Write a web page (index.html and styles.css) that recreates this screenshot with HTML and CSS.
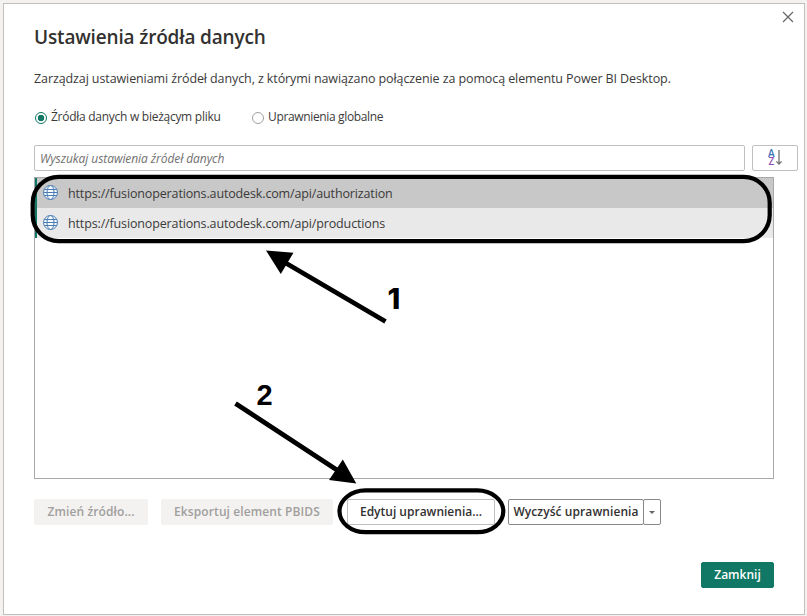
FILE: index.html
```html
<!DOCTYPE html>
<html lang="pl">
<head>
<meta charset="utf-8">
<title>Ustawienia źródła danych</title>
<link rel="stylesheet" href="styles.css">
</head>
<body>
<main class="dialog">
  <header class="header">
    <h1 class="title"><span>Ustawienia źródła danych</span></h1>
    <button class="close" aria-label="Zamknij okno"><svg width="12" height="12" viewBox="0 0 12 12"><path d="M1 1l10 10M11 1L1 11" stroke="#666" stroke-width="1.2" fill="none"/></svg></button>
  </header>
  <p class="description"><span>Zarządzaj ustawieniami źródeł danych, z którymi nawiązano połączenie za pomocą elementu Power BI Desktop.</span></p>
  <div class="scopes">
    <label class="scope scope-file"><i class="radio checked"></i><span>Źródła danych w bieżącym pliku</span></label>
    <label class="scope scope-global"><i class="radio"></i><span>Uprawnienia globalne</span></label>
  </div>
  <div class="search-row">
    <div class="search"><span>Wyszukaj ustawienia źródeł danych</span></div>
    <button class="sort" aria-label="Sortuj">
      <svg width="16" height="20" viewBox="0 0 16 20"><text class="a" x="1" y="9">A</text><text class="z" x="1.5" y="17">Z</text><path d="M12 2v14M9.4 13.4l2.6 2.7 2.6-2.7" stroke="#707070" stroke-width="1.3" fill="none"/></svg>
    </button>
  </div>
  <div class="list">
    <div class="row selected">
      <svg class="globe" width="15" height="15" viewBox="0 0 15 15"><g fill="#f8fbfd" stroke="#4a7db5" stroke-width="1"><circle cx="7.5" cy="7.5" r="7"/><ellipse cx="7.5" cy="7.5" rx="3.5" ry="7"/><path d="M1.2 4.5h12.6M1.2 10.5h12.6M.5 7.5h14" fill="none"/></g></svg>
      <span>https://fusionoperations.autodesk.com/api/authorization</span>
    </div>
    <div class="row">
      <svg class="globe" width="15" height="15" viewBox="0 0 15 15"><g fill="#f8fbfd" stroke="#4a7db5" stroke-width="1"><circle cx="7.5" cy="7.5" r="7"/><ellipse cx="7.5" cy="7.5" rx="3.5" ry="7"/><path d="M1.2 4.5h12.6M1.2 10.5h12.6M.5 7.5h14" fill="none"/></g></svg>
      <span>https://fusionoperations.autodesk.com/api/productions</span>
    </div>
  </div>
  <div class="actions">
    <button class="btn disabled change"><span>Zmień źródło...</span></button>
    <button class="btn disabled export"><span>Eksportuj element PBIDS</span></button>
    <button class="btn edit"><span>Edytuj uprawnienia...</span></button>
    <button class="btn clear"><span>Wyczyść uprawnienia</span></button>
    <button class="btn more" aria-label="Więcej"><svg width="6" height="3" viewBox="0 0 6 3"><path d="M0 0h6L3 3z" fill="#666"/></svg></button>
  </div>
  <footer class="footer"><button class="btn primary"><span>Zamknij</span></button></footer>
</main>
<svg class="annotations" width="807" height="616" viewBox="0 0 807 616">
  <g fill="none" stroke="#000">
    <rect x="32.7" y="176.9" width="737" height="64.2" rx="26" stroke-width="4.2"/>
    <rect x="339.5" y="490.4" width="163.8" height="41.8" rx="26" ry="20.9" stroke-width="4.2"/>
    <path d="M385.5 321.5L284 262M235.5 403.5L340 472" stroke-width="4.8"/>
  </g>
  <path d="M266 250.5l27.5 2.2-12.7 21.2zM356.3 483.5l-27.3-3.5 13.8-20.5z"/>
  <text class="digit-one" x="387.6" y="308.5">1</text><text class="digit-two" x="256.5" y="405">2</text>
</svg>
</body>
</html>
```

FILE: styles.css
```css
* { box-sizing: border-box; }
body {
  margin: 0;
  padding: 3px 2px 1px 3px;
  height: 616px;
  overflow: hidden;
  background: #f3f2f1;
  color: #3b3a39;
  font: 12px/18px "Open Sans", "Noto Sans", sans-serif;
}
button { font: inherit; color: inherit; padding: 0; margin: 0; background: #fff; }
span { white-space: nowrap; }
.dialog {
  width: 802px;
  height: 612px;
  border: 1px solid #c1bfbd;
  background: #fff;
  padding: 0 6px 0 30px;
}
.header { display: flex; justify-content: space-between; height: 64px; }
.title { margin: 19px 0 0; font-size: 19px; line-height: 28px; font-weight: 600; letter-spacing: -0.16px; color: #323130; }
.close { border: 0; width: 12px; height: 12px; margin: 7px 4px 0 0; display: flex; }
.description { margin: 0; height: 40px; line-height: 21px; font-size: 12.5px; letter-spacing: -0.1px; }
.scopes { display: flex; height: 37px; line-height: 18px; }
.scope { display: flex; align-items: flex-start; gap: 4px; }
.scope-file { width: 217px; letter-spacing: -0.27px; }
.scope-global { letter-spacing: -0.35px; }
.radio {
  flex: none;
  width: 12px;
  height: 12px;
  margin: 4px 0 0 1px;
  border: 1px solid #a0a0a0;
  border-radius: 50%;
}
.radio.checked { border-color: #117865; background: radial-gradient(circle, #117865 3px, #fff 3.6px); }
.search-row { display: flex; gap: 7px; height: 32px; }
.search {
  width: 711px;
  height: 26px;
  border: 1px solid #c1bfbd;
  border-radius: 2px;
  padding: 0 5px;
  line-height: 26px;
  font-style: italic;
  letter-spacing: -0.07px;
  color: #707070;
}
.sort {
  width: 46px;
  height: 26px;
  border: 1px solid #c1bfbd;
  border-radius: 2px;
  display: flex;
  align-items: center;
  justify-content: center;
}
.sort svg { overflow: visible; }
.a, .z { font-size: 10px; font-weight: 600; }
.a { fill: #3a74b5; }
.z { fill: #8e4cb0; }
.list { width: 740px; height: 302px; border: 1px solid #a8a8a8; }
.row {
  display: flex;
  align-items: center;
  gap: 10px;
  height: 30px;
  padding-left: 6px;
  background: #e9e9e9;
  border-left: 2px solid #117865;
  font-size: 12.5px;
  letter-spacing: -0.14px;
}
.row span { line-height: 20px; padding-top: 1px; }
.row.selected { background: #c8c8c8; }
.globe { flex: none; margin-bottom: 1px; }
.actions { display: flex; margin-top: 20px; height: 26px; }
.btn {
  height: 26px;
  border: 1px solid #c1bfbd;
  border-radius: 2px;
  font-weight: 600;
  color: #323130;
  line-height: 24px;
  display: flex;
  justify-content: center;
  align-items: center;
}
.disabled { background: #f3f2f1; border-color: #f3f2f1; color: #a19f9d; letter-spacing: 0.1px; }
.change { width: 114px; margin-right: 13px; }
.export { width: 172px; margin-right: 14px; }
.edit { width: 148px; margin-right: 13px; }
.clear { width: 136px; border-color: #8a8886; letter-spacing: 0.08px; }
.more { width: 18px; margin-left: -1px; border-color: #8a8886; }
.footer { display: flex; justify-content: flex-end; margin-top: 37px; padding-right: 24px; }
.primary { width: 73px; background: #117865; border-color: #117865; color: #fff; }
.annotations { position: absolute; left: 0; top: 0; pointer-events: none; }
.digit-one { font: 800 29px Inter, sans-serif; }
.digit-two { font: bold 29px "Liberation Sans", sans-serif; }
```
